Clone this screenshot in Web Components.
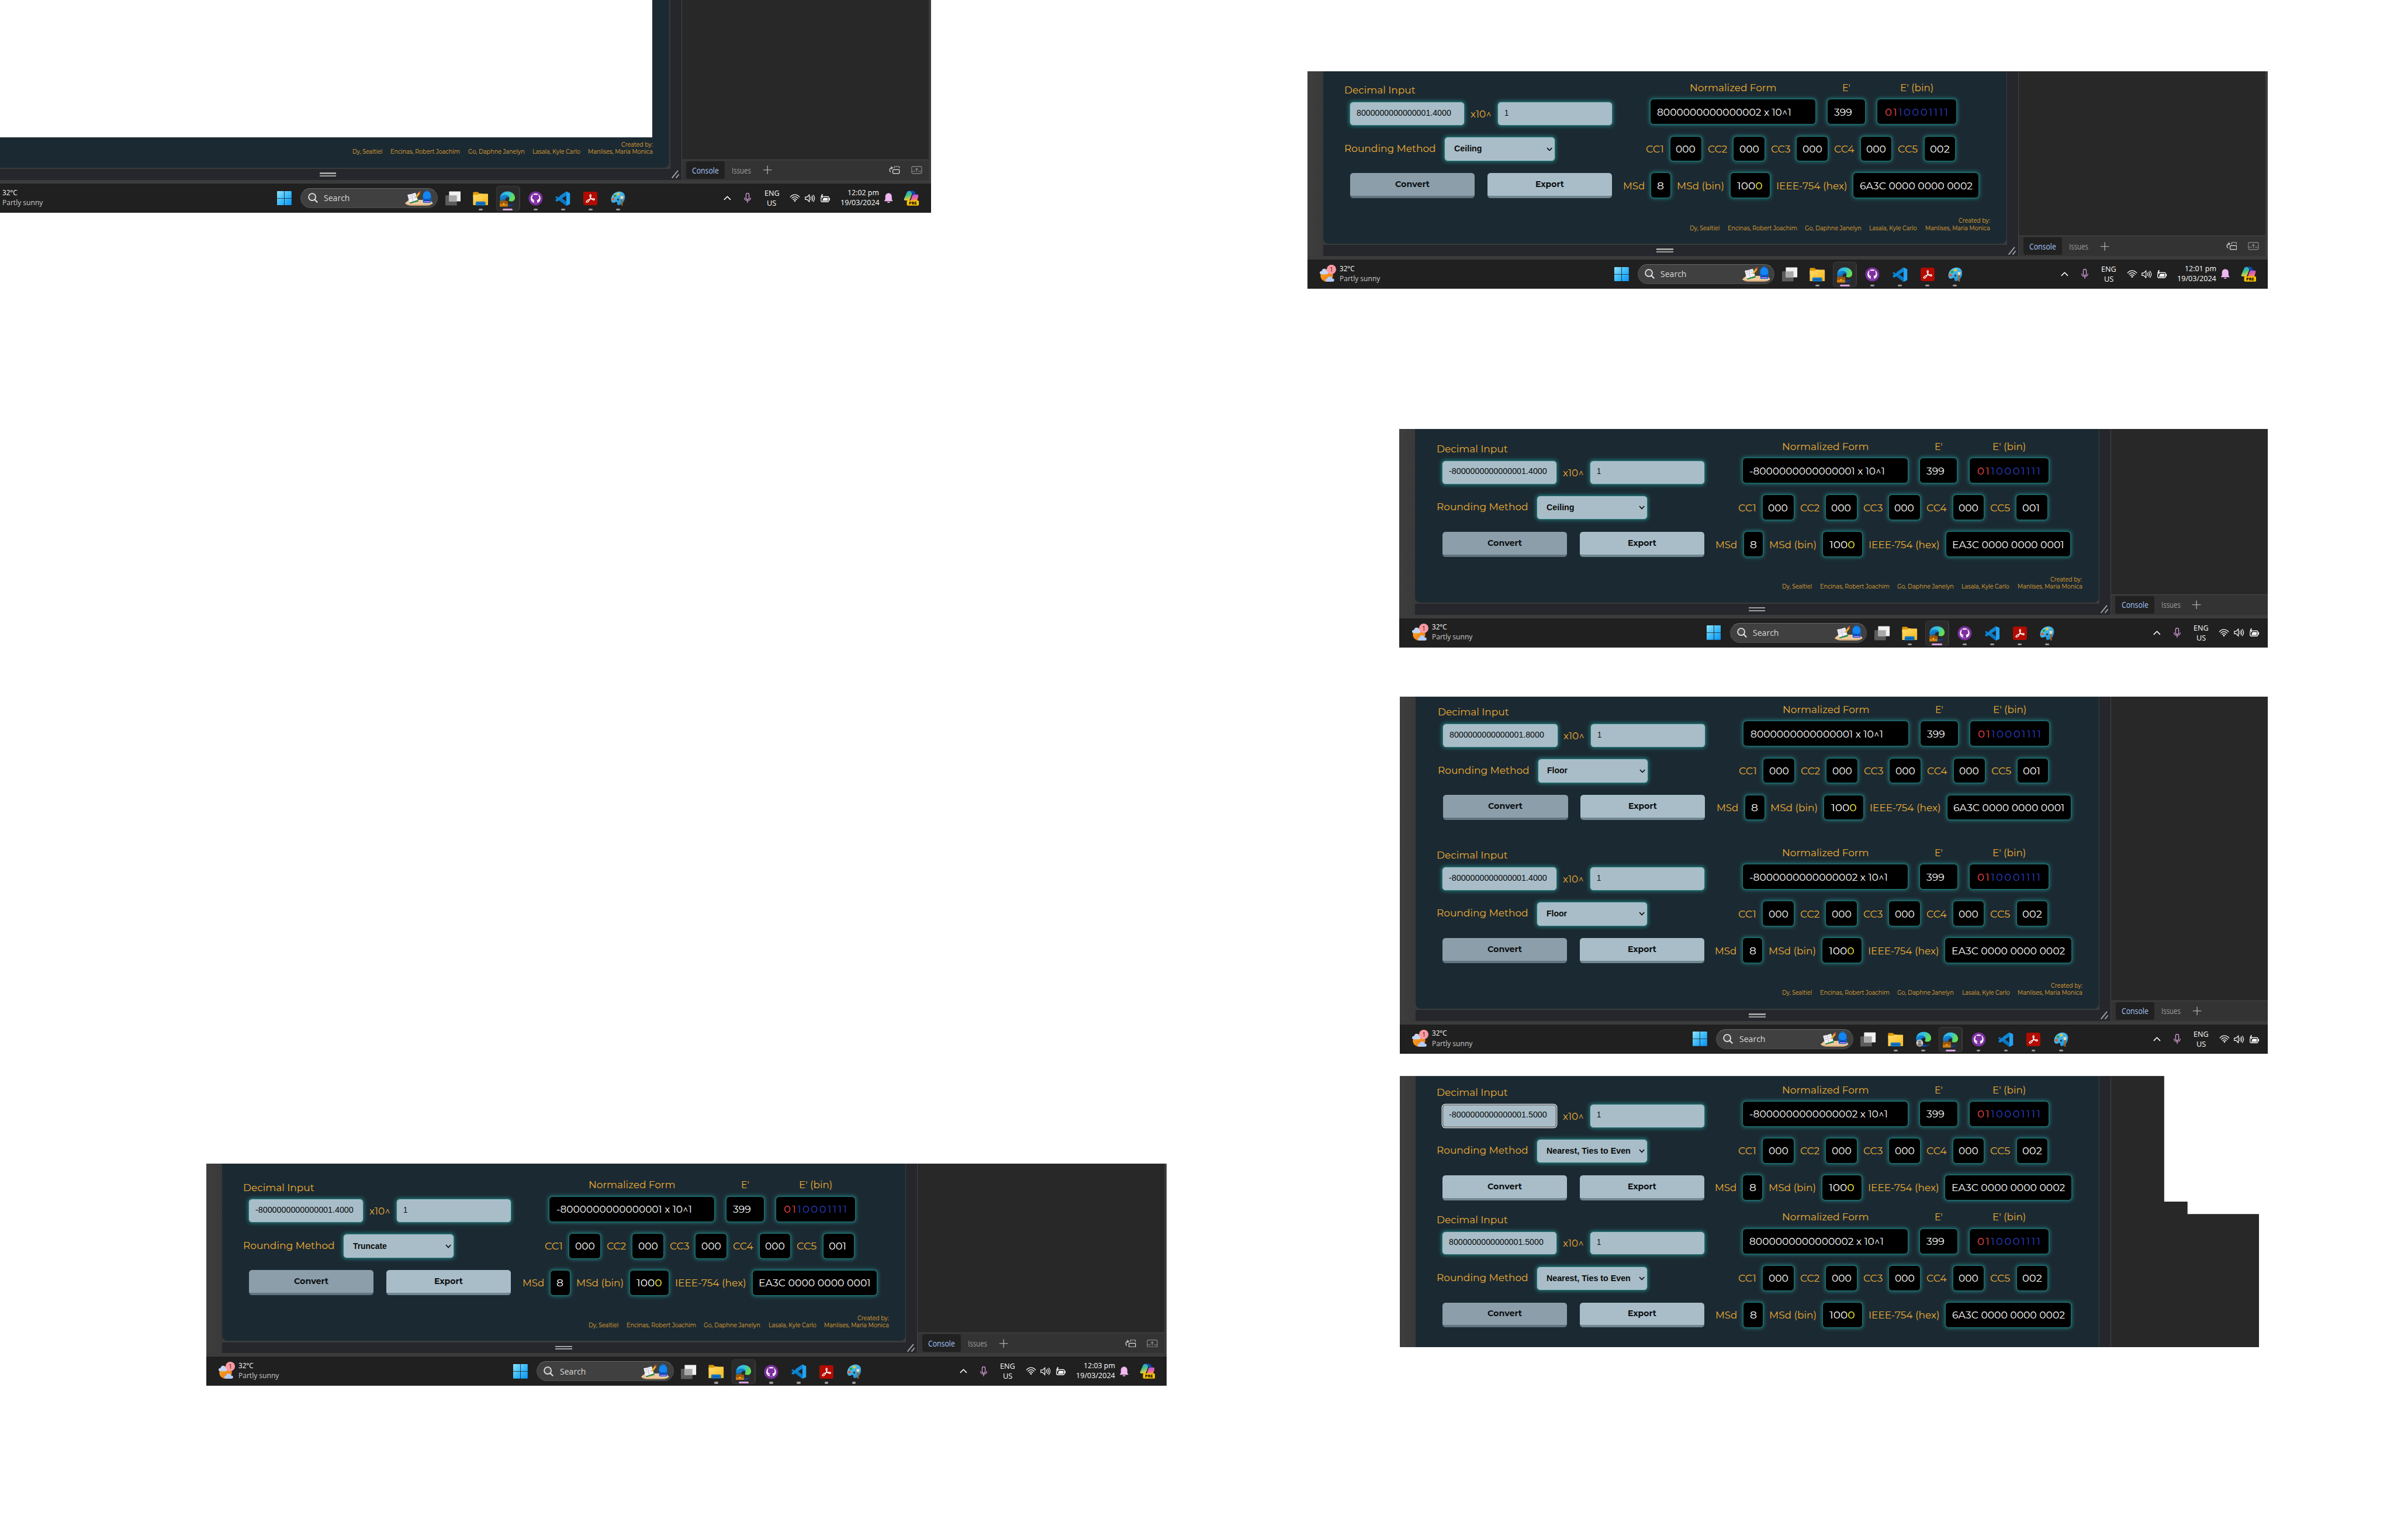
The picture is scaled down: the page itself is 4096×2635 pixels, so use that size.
<!DOCTYPE html>
<html lang="en">
<head>
<meta charset="utf-8">
<title>Decimal-64 converter test captures</title>
<style>
html,body{margin:0;background:#fff}
body{overflow:hidden;width:4096px;height:2635px;font-family:Montserrat,Inter,"Open Sans",sans-serif;font-feature-settings:"calt" 0}
</style>
</head>
<body>
<test-board></test-board>
<script>
const fits=[];
const mk=(name,render,init)=>customElements.define(name,class extends HTMLElement{
  constructor(){super();this.attachShadow({mode:'open'})}
  connectedCallback(){if(this.done)return;this.done=true;this.shadowRoot.innerHTML=render(this);if(init)init(this)}
});
const A=(e,n,d='')=>e.getAttribute(n)??d;

/* one line of text condensed or stretched to a given width */
mk('fit-text',e=>`<style>
:host{display:block;flex:none;width:${A(e,'w')}px;font-size:${A(e,'s','20')}px;line-height:20px;white-space:pre}
span{display:inline-block;transform-origin:0 50%;vertical-align:top}
</style><span><slot></slot></span>`,e=>fits.push(e));
const fitAll=()=>fits.forEach(e=>{
  const s=e.shadowRoot.querySelector('span');s.style.transform='none';
  const a=e.getBoundingClientRect().width,b=s.getBoundingClientRect().width;
  if(b)s.style.transform=`scaleX(${a/b})`;
});

/* black output box */
mk('value-box',e=>`<style>
:host{display:flex;align-items:center;box-sizing:border-box;flex:none;height:49px;${A(e,'w')?`width:${A(e,'w')}px;`:''}padding:0 ${A(e,'p','12.3')}px;background:#000;color:#fff;border-radius:6px;box-shadow:0 0 0 1.5px #1f6d6e,0 0 8px 1.5px #23787a}
</style><slot></slot>`);

mk('input-box',e=>`<style>
:host{display:flex;align-items:center;box-sizing:border-box;flex:none;width:228px;height:45.3px;padding:0 13px 3px;background:#a8bdc8;color:#0b0b0b;border-radius:6px;font-family:"Liberation Sans",sans-serif;font-weight:400;box-shadow:0 0 0 1px #257a7a,0 0 8px 1.5px #23787a}
:host([focused]){box-shadow:inset 0 0 0 1px #101010,0 0 0 1.5px #fff}
</style><slot></slot>`);

mk('push-button',e=>`<style>
:host{display:flex;align-items:center;justify-content:center;box-sizing:border-box;flex:none;width:249px;height:50px;background:#a8bdc8;border-bottom:5px solid #718792;border-radius:6px;color:#0c0f12;font-weight:700}
:host([pressed]){background:#8b9eaa;border-bottom-color:#617480}
</style><slot></slot>`);

mk('select-box',e=>`<style>
:host{display:flex;align-items:center;justify-content:space-between;box-sizing:border-box;flex:none;width:219px;height:46.3px;padding:0 4px 0 18px;background:#a8bdc8;color:#0b0b0b;border-radius:6px;font:700 16.6px "Liberation Sans",sans-serif;box-shadow:0 0 0 1px #257a7a,0 0 8px 1.5px #23787a}
svg{width:12px;height:8px}
</style><slot></slot><svg viewBox="0 0 12 8"><path d="M1.2 1.2 6 6.4l4.8-5.2" fill="none" stroke="#0b0b0b" stroke-width="2"/></svg>`);

mk('convert-form',e=>{
 const cc=[[36],[39],[39],[40.6],[40]];
 return `<style>
:host{display:flex;height:253px;color:#eeac34;flex:none;font-weight:400}
.l{width:588.5px;padding:26.8px 0 0 43px;box-sizing:border-box;flex:none}
.in{display:flex;align-items:center;gap:12.6px;margin:14.9px 0 0 11.5px}
.rm{display:flex;align-items:center;gap:18px;margin-top:24.7px}
.rm>fit-text{padding-bottom:4px}
.bt{display:flex;gap:25px;margin:25px 0 0 11.5px}
.r{width:733px;padding-top:21.8px;box-sizing:border-box;flex:none}
.g{display:flex;gap:25px;padding-left:66.6px}
.g>div{display:flex;flex-direction:column;align-items:center;gap:14.3px}
.c{display:flex;align-items:center;gap:12.9px;padding-left:57.2px;margin-top:24.7px}
.m{display:flex;align-items:center;justify-content:center;gap:12.8px;margin-top:24.6px}
i{font-style:normal}.d{letter-spacing:2.6px}.red{color:#f4474b}.blue{color:#2b3fc4}.y{color:#f6f83c}
</style>
<div class="l">
 <fit-text w="142">Decimal Input</fit-text>
 <div class="in"><input-box ${e.hasAttribute('focused')?'focused':''}><fit-text w="${A(e,'iw')}" s="16.6">${A(e,'in')}</fit-text></input-box><fit-text w="42">x10^</fit-text><input-box><fit-text w="8.5" s="16.6">1</fit-text></input-box></div>
 <div class="rm"><fit-text w="183">Rounding Method</fit-text><select-box><fit-text w="${A(e,'mw')}" s="16.6">${A(e,'method')}</fit-text></select-box></div>
 <div class="bt"><push-button ${e.hasAttribute('idle')?'':'pressed'}><fit-text w="69" s="16">Convert</fit-text></push-button><push-button><fit-text w="57" s="16">Export</fit-text></push-button></div>
</div>
<div class="r">
 <div class="g">
  <div><fit-text w="173.5">Normalized Form</fit-text><value-box w="329" p="13"><fit-text w="${A(e,'nw')}">${A(e,'norm')}</fit-text></value-box></div>
  <div><fit-text w="16">E'</fit-text><value-box w="74"><fit-text w="36">399</fit-text></value-box></div>
  <div><fit-text w="67">E' (bin)</fit-text><value-box w="157.5" p="15"><fit-text w="129" class="d"><i class="red">01</i><i class="blue">10001111</i></fit-text></value-box></div>
 </div>
 <div class="c">${cc.map(([w],i)=>`<fit-text w="${w}">CC${i+1}</fit-text><value-box w="61.5" p="11"><fit-text w="${i==4&&A(e,'last')=='001'?35:39.5}">${i==4?A(e,'last'):'000'}</fit-text></value-box>`).join('')}</div>
 <div class="m"><fit-text w="43.4">MSd</fit-text><value-box w="38.5"><fit-text w="14">8</fit-text></value-box><fit-text w="94.6">MSd (bin)</fit-text><value-box w="78" p="13"><fit-text w="51">100<i class="y">0</i></fit-text></value-box><fit-text w="142">IEEE-754 (hex)</fit-text><value-box><fit-text w="${A(e,'hw')}">${A(e,'hex')}</fit-text></value-box></div>
</div>`});

mk('credit-lines',e=>`<style>
:host{display:flex;flex-direction:column;align-items:flex-end;color:#e6a533;padding:35.5px 33px 0 0;height:55px;box-sizing:content-box;flex:none}
div{display:flex;gap:15.8px;margin-top:-5.7px}
</style><fit-text w="63" s="12">Created by:</fit-text><div><fit-text w="60" s="12">Dy, Sealtiel</fit-text><fit-text w="139" s="12">Encinas, Robert Joachim</fit-text><fit-text w="113" s="12">Go, Daphne Janelyn</fit-text><fit-text w="95.5" s="12">Lasala, Kyle Carlo</fit-text><fit-text w="129.5" s="12">Manlises, Maria Monica</fit-text></div>`);

const G={
start:`<svg width="29" height="29" viewBox="0 0 29 29"><defs><linearGradient id="a" x2="1" y2="1"><stop stop-color="#8fe2ff"/><stop offset=".5" stop-color="#3cbcfb"/><stop offset="1" stop-color="#0a93f5"/></linearGradient></defs><path fill="url(#a)" d="M0 1a1 1 0 0 1 1-1h13v14H0zM15 0h13a1 1 0 0 1 1 1v13H15zM0 15h14v14H1a1 1 0 0 1-1-1zM15 15h14v13a1 1 0 0 1-1 1H15z"/></svg>`,
lens:`<svg width="20" height="20" viewBox="0 0 20 20" fill="none" stroke="#e4e4e4" stroke-width="2.1"><circle cx="8.3" cy="8.3" r="7" fill="#4c4f50"/><path d="M13.3 13.5l5 5" stroke-width="2.4" stroke-linecap="round"/></svg>`,
school:`<svg width="58" height="32" viewBox="0 0 58 32"><path d="M1 26.500 9 20h42l6 6.500q-5 4.500-14 4.500H15Q5 31 1 26.500z" fill="#efc99c"/><path d="M1 26.500q5 3 14 3h28q9 0 14-3-5 5-14 5H15q-9 0-14-5z" fill="#c79c6c"/><path d="M7 11 24 7l4 16-17 4.500z" fill="#2d8a4b"/><path d="M6 9.500 14.500 8 17 23l-7 2zM14.500 8 22 5.500 26.500 20 17 23z" fill="#f4f2fa"/><path d="M14.500 8 17 23M9 13l4-1M10 17l4-1M17.500 11l4-1M18.500 15l4-1" stroke="#a9a3be" fill="none"/><path d="M22 14 28 5l3.500 2L25 15l-3 2z" fill="#f7a928"/><path d="M27.500 5.500 29.300 3q2-1 2.700.6l-1 3z" fill="#e5543f"/><path d="M42 2.500q3-3 6 0v3h-6z" fill="none" stroke="#1c6fd8" stroke-width="1.500"/><path d="M37 12q0-9 8-9t8 9v12q0 2-2 2H39q-2 0-2-2z" fill="#1186f4"/><path d="M37 16h4v9h-3zM53 16h-4v9h3z" fill="#0b5fc8"/><path d="M38 21q7-6 14 0v3q-7 3-14 0z" fill="#0a49ad"/><path d="M39 23.500h12" stroke="#b678f0" stroke-width="2.200"/></svg>`,
tasks:`<svg width="31" height="29" viewBox="0 0 31 29"><rect y="8.500" width="23" height="20" rx="1" fill="#5c5c5c"/><rect x="7.500" y="0.500" width="23" height="20" rx="1" fill="#f1f1f1"/><path d="M7.500 8.500H23v12H7.500z" fill="#a9a9a9"/></svg>`,
folder:`<svg width="31" height="28" viewBox="0 0 31 28"><defs><linearGradient id="f" x2="1" y2="1"><stop stop-color="#ffdc6b"/><stop offset="1" stop-color="#fbb81b"/></linearGradient></defs><path d="M.5 2Q.5.500 2 .5h8l3 3h5v8H.5z" fill="#dd9a06"/><path d="M.5 6h10l3-2H29q1.500 0 1.500 1.500V27H.5z" fill="url(#f)"/><path d="M5.500 27.500V22q0-2.500 2.500-2.500h15q2.500 0 2.500 2.500v5.500z" fill="#1377c4"/><path d="M9 23.800h13" stroke="#0a4f92" stroke-width="1.200"/></svg>`,
edge:(b)=>`<svg width="31" height="31" viewBox="0 0 31 31"><defs><linearGradient id="e1" x2="1" y2=".4"><stop stop-color="#2aa6ee"/><stop offset=".5" stop-color="#35c1e0"/><stop offset="1" stop-color="#66e04e"/></linearGradient><linearGradient id="e2" x2=".6" y2="1"><stop stop-color="#1493df"/><stop offset="1" stop-color="#0b4ea6"/></linearGradient></defs><path d="M.5 15C.5 6 7 .5 15.500.500 24.500.500 30.500 6.500 30.500 13c0 5-3.500 7.500-7.500 7.500-4.500 0-5.500-1.700-4.500-3 2-3.500-.5-7.500-6-7.500C6 10 .5 12 .5 15z" fill="url(#e1)"/><path d="M.5 14C1.500 9 6 7.500 11 7.500c5 0 8.500 2.500 8.500 5.500-5-2.500-8.500 1-8.500 5 0 5 4.500 9 10 9 3 0 5.500-1 7.500-2.500C26 28.500 21.500 30.500 16 30.500 6.500 30.500.500 23.500.500 14z" fill="url(#e2)"/><path d="M11 18c0 5 4.500 9 10 9 3 0 5.500-1 7.500-2.500-2.500 4-7 6-12.500 6-3-3-5.500-7-5-12.500z" fill="#123f8c"/>${b=='w'?`<path d="M5 20v-2h6v2" fill="none" stroke="#7a4608" stroke-width="1.300"/><rect y="20" width="16" height="11" rx="1" fill="#cf7d0e"/><path d="M0 20h16v5.500H0z" fill="#9a5408"/><circle cx="8" cy="25.500" r="1.500" fill="#ffcf40"/>`:`<circle cx="7.500" cy="23" r="7" fill="#c9c6c4"/><circle cx="7.500" cy="20.500" r="2.800" fill="#7c7875"/><path d="M3 27q0-3.500 4.500-3.500T12 27q-4 3.500-9 0z" fill="#7c7875"/>`}</svg>`,
github:`<svg width="29" height="29" viewBox="0 0 29 29"><circle cx="14.500" cy="14.500" r="14" fill="#7d2fa0"/><circle cx="14.500" cy="14.500" r="9.800" fill="#fff"/><path d="M11.500 24v-3.500c-2.500.5-3-1-4-2 1.500 0 2 1.500 4 1 .1-.8.400-1.400.8-1.700-3-.5-4.800-1.800-4.800-5 0-1.400.5-2.500 1.200-3.300-.2-.8-.2-2 .2-3 1.300.1 2.200.6 3 1.200 1.700-.5 3.700-.5 5.400 0 .8-.6 1.700-1.100 3-1.200.4 1 .4 2.200.2 3 .7.8 1.200 1.900 1.200 3.300 0 3.200-1.800 4.500-4.800 5 .5.500.8 1.300.8 2.200v4z" fill="#7d2fa0"/></svg>`,
code:`<svg width="30" height="30" viewBox="0 0 30 30"><path d="M22 .5 29.500 4v22L22 29.500z" fill="#24a3f3"/><path d="M22 .5 8 14 3 10 .5 11.200v2L22 29.500V21L8 10z" fill="#0a77c2"/><path d="M22 .5V9L3.500 21 .5 19.200v-2z" fill="#0e86d6"/></svg>`,
pdf:`<svg width="28" height="27" viewBox="0 0 28 27"><rect width="28" height="27" rx="4" fill="#b30b00"/><path d="M6 19.500c1.500-3 9-6 15-5.500 2.500.5 1.500 3-1 2.500-4-1-7-5-7-8.500 0-3 2.500-3 2.500-.5 0 4-4 12-7 13.500-1.500.5-3-.3-2.500-1.500z" fill="none" stroke="#fff" stroke-width="1.600"/></svg>`,
paint:`<svg width="29" height="30" viewBox="0 0 29 30"><defs><linearGradient id="p" x2=".8" y2="1"><stop stop-color="#6fd8f8"/><stop offset="1" stop-color="#1689d2"/></linearGradient></defs><path d="M17 1c7 0 11.500 4.500 11.500 10.500 0 8-6 16.500-13 16.500-4 0-1.500-4-3.500-6-2.500-2-4 2.500-8 1C1 22.500 0 18 1 14 2.500 7 9 1 17 1z" fill="url(#p)"/><circle cx="8" cy="9.500" r="2.800" fill="#35a043"/><circle cx="15" cy="6" r="2.600" fill="#f7c52b"/><circle cx="5" cy="16" r="2.700" fill="#e4572f"/><circle cx="14.500" cy="17" r="2" fill="#16405c"/><path d="M19 10h6.500l-1 6h-4.500z" fill="#ecd9b4"/><path d="M21 16h2.800v12q-1.400 3-2.800 0z" fill="#a8611c"/></svg>`,
up:`<svg width="15" height="9" viewBox="0 0 15 9"><path d="M1 8l6.500-6.500L14 8" fill="none" stroke="#fff" stroke-width="1.900"/></svg>`,
mic:`<svg width="14" height="20" viewBox="0 0 14 20" fill="none" stroke="#d9a0dc" stroke-width="1.500"><rect x="4" y=".8" width="6" height="12.500" rx="3"/><path d="M.8 9.500C.8 17.500 13.200 17.500 13.200 9.500M7 15.500V20"/></svg>`,
wifi:`<svg width="21" height="16" viewBox="0 0 21 16" fill="none" stroke="#fff" stroke-width="1.500"><path d="M1 6.200c5.500-6.500 13.500-6.500 19 0M3.800 9c4-4.800 9.400-4.800 13.400 0M6.500 11.700c2.500-3 5.500-3 8 0"/><circle cx="10.500" cy="13.600" r="1.600" fill="#fff" stroke="none"/></svg>`,
sound:`<svg width="21" height="17" viewBox="0 0 21 17" fill="none" stroke="#fff" stroke-width="1.400"><path d="M1 6h3.500L9 1.500v14L4.500 11H1zM11.500 5.500q2.500 3 0 6M14 3.500q4 5 0 10M16.500 1.500q6 7 0 14"/></svg>`,
batt:`<svg width="21" height="17" viewBox="0 0 21 17"><rect x="2" y="5" width="15.500" height="10.500" rx="2" fill="none" stroke="#fff" stroke-width="1.500"/><path d="M7 7.500h8.500v6h-11zM18 8h2v4.500h-2z" fill="#fff"/><path d="M3.500 0 1 6.500h2.500L2.500 11 7.500 4H5L6 0z" fill="#fff" stroke="#202020" stroke-width=".5"/></svg>`,
bell:`<svg width="17" height="20" viewBox="0 0 17 20" fill="#efb8f1"><path d="M2 13V7.500C2 3 5 .5 8.500.500S15 3 15 7.500V13l2 3v.8H0V16zM5.500 17.800h6q-.6 2.200-3 2.200t-3-2.200z"/></svg>`,
pilot:`<svg width="31" height="30" viewBox="0 0 31 30"><defs><linearGradient id="c1" x2=".3" y2="1"><stop stop-color="#1f9df0"/><stop offset=".5" stop-color="#3fc08a"/><stop offset="1" stop-color="#f5cb30"/></linearGradient><linearGradient id="c2" x2=".3" y2="1"><stop stop-color="#9a5cf0"/><stop offset=".6" stop-color="#e95fa8"/><stop offset="1" stop-color="#f58a5a"/></linearGradient></defs><path d="M7 3Q8 1 10.500 1h8.500l-6.500 17q-.8 2-3 2H3Q0 20 1 16.500z" fill="url(#c1)"/><path d="M13 1h6q3 0 4 3l1 4h-5z" fill="#1246b8"/><path d="M17.500 10q.7-2 3-2H27q3 0 2.500 3.500L27 20H14z" fill="url(#c2)"/><rect x="6.500" y="20" width="24" height="10" rx="2" fill="#ffc400"/><text x="18.500" y="28.200" text-anchor="middle" font-family="Open Sans,sans-serif" font-size="8.500" font-weight="800" fill="#1a1400">PRE</text></svg>`,
sun:`<svg width="32" height="29" viewBox="0 0 32 29"><defs><linearGradient id="w" x2=".6" y2="1"><stop stop-color="#fbb02b"/><stop offset="1" stop-color="#ef7a12"/></linearGradient></defs><circle cx="14" cy="14.500" r="12.500" fill="url(#w)"/><path d="M3.500 12Q0 12 0 8.800T4 5.500Q5 1 9 1t5 4.500q3 0 3 3.200T13.500 12z" fill="#c4d6f8"/><path d="M15 27q-3.500 0-3.500-3.200t3.500-3.300q1-4 5-4t5 4q4 0 4 3.200T25.500 27z" fill="#b3cbf5"/></svg>`
};

mk('app-icon',e=>`<style>
:host{display:flex;flex-direction:column;align-items:center;justify-content:flex-end;width:48px;height:50px;flex:none;box-sizing:border-box}
:host([active]){background:#2b2b2b;border:1px solid #3a3a3a;border-right-width:3px;border-radius:6px}
.i{height:32px;display:flex;align-items:center;margin-bottom:${e.hasAttribute('active')?3:4}px}
b{height:4px;width:8px;border-radius:2px;background:${e.hasAttribute('plain')?'transparent':'#999'};margin-bottom:1px}
:host([active]) b{width:20px;background:#d99fe2;margin-bottom:0}
svg{display:block}
</style><div class="i">${A(e,'name').startsWith('edge')?G.edge(A(e,'name').slice(4)):G[A(e,'name')]}</div><b></b>`);

mk('win-taskbar',e=>{
const cut=e.hasAttribute('cut'),nb=e.hasAttribute('extra');
return `<style>
:host{display:flex;height:59.300px;box-sizing:border-box;background:#202020;border-top:1.500px solid #414141;color:#fff;font-family:"Open Sans","Noto Sans",sans-serif;flex:none;align-items:center}
svg{display:block;flex:none}
.w{display:flex;width:${nb?585.500:613.500}px;flex:none;align-items:center;padding-left:25px;box-sizing:border-box}
.w .ic{width:39.500px;position:relative;height:34px;display:flex;align-items:flex-end}
.bd{position:absolute;left:14px;top:-2px;width:19px;height:19px;border-radius:50%;background:#ff98a2;color:#222;font-size:12px;line-height:19px;text-align:center}
.w .t{padding-bottom:3px}
.w .t fit-text:last-child{color:#c8c8c8}
.s{display:flex;align-items:center;width:274px;height:40px;box-sizing:border-box;background:#404040;border:1px solid #4e4e4e;border-top-color:#686868;border-radius:20px;margin-left:18px;padding:0 7px 0 13px;color:#dadada;flex:none}
.s fit-text{margin-left:12px;margin-right:auto}
.a{display:flex;margin-left:6.500px;gap:7px;padding-top:2px}
.y{display:flex;align-items:center;margin-left:auto;width:414px;flex:none;box-sizing:border-box}
.k{display:flex;flex-direction:column;align-items:center}
</style>
<div class="w"><div class="ic">${e.hasAttribute('noicon')?'':G.sun+'<span class="bd">1</span>'}</div><div class="t"><fit-text w="30" s="15.500">32°C</fit-text><fit-text w="81" s="15.500">Partly sunny</fit-text></div></div>
${G.start}
<div class="s">${G.lens}<fit-text w="52" s="17">Search</fit-text>${G.school}</div>
<div class="a"><app-icon name="tasks" plain></app-icon><app-icon name="folder"></app-icon>${nb?'<app-icon name="edgep"></app-icon>':''}<app-icon name="edgew" active></app-icon><app-icon name="github"></app-icon><app-icon name="code"></app-icon><app-icon name="pdf"></app-icon><app-icon name="paint"></app-icon></div>
<div class="y">${G.up}<div style="margin-left:26px">${G.mic}</div><div class="k" style="margin-left:26px"><fit-text w="30" s="15.500">ENG</fit-text><fit-text w="19" s="15.500">US</fit-text></div><div style="margin-left:21px">${G.wifi}</div><div style="margin-left:9px">${G.sound}</div><div style="margin-left:9px">${G.batt}</div>
${cut?'':`<div class="k" style="margin-left:20px;align-items:flex-end;padding-bottom:2px"><fit-text w="63" s="15.500">${A(e,'time')}</fit-text><fit-text w="78" s="15.500">19/03/2024</fit-text></div><div style="margin-left:10px">${G.bell}</div><div style="margin-left:22px">${G.pilot}</div>`}</div>`});

mk('dev-tools',e=>{
const bare=e.hasAttribute('bare'),cut=e.hasAttribute('cut');
return `<style>
:host{display:flex;flex-direction:column;justify-content:flex-end;box-sizing:border-box;width:494px;flex:none;background:#282828;border-left:2px solid #434343;font-family:"Open Sans","Noto Sans",sans-serif}
.d{display:flex;align-items:center;height:41px;box-sizing:border-box;background:#333;border-top:1.500px solid #484848;padding:0 13px 0 8.500px;color:#9c9c9c}
.c{display:flex;align-items:center;background:#212121;border-radius:4px;height:35px;padding:0 12px;color:#a4c4fa;margin-right:14px}
.p{margin-left:23px}
.r{margin-left:auto;display:flex;gap:22px}
svg{display:block}
</style>${bare?'':`<div class="d"><div class="c"><fit-text w="53.500" s="16">Console</fit-text></div><fit-text w="38.500" s="16">Issues</fit-text><svg class="p" width="19" height="18" viewBox="0 0 19 18"><path d="M9.500.500v17M1 9h17" stroke="#c4c4c4" stroke-width="1.300"/></svg>
${cut?'':`<div class="r"><svg width="22" height="16" viewBox="0 0 22 16" fill="none" stroke="#e4e4e4" stroke-width="1.400"><rect x="7.700" y="7.500" width="13" height="7.500" rx="1.200"/><path d="M10.500 4.500V1h10.200v5" stroke-dasharray="2.200 1.500"/><path d="M3.500 12.500C0 9 1 4 5.500 3.500M4 1l3 2.500-2.500 3"/></svg><svg width="22" height="16" viewBox="0 0 22 16" fill="none" stroke="#8f8f8f" stroke-width="1.300"><rect x="1" y="1" width="20" height="14" rx="2"/><path d="M1 10.500h7m6 0h7M11 12V5M8.200 7.500 11 4.800l2.800 2.700"/></svg></div>`}</div>`}`});

/* a browser window cropped to the given box */
mk('screen-crop',e=>{
const bare=e.hasAttribute('bare'),cut=e.hasAttribute('cut')?'cut':'';
const H=+A(e,'h'),W=+A(e,'w'),dx=+A(e,'dx','0');
return `<style>
:host{display:block;position:absolute;left:${A(e,'x')}px;top:${A(e,'y')}px;width:${W}px;height:${H}px;overflow:hidden;background:#3b3b3b}
.win{display:flex;flex-direction:column;width:1920px;height:${H}px;margin-left:${-dx}px}
.top{display:flex;flex:1;min-height:0}
.edge{width:31.500px;flex:none;background:linear-gradient(90deg,#3e3e3e,#393939)}
.mid{display:flex;flex-direction:column;width:1390px;flex:none}
.row{display:flex;flex:1;min-height:0}
.page{width:1366px;margin-right:1.500px;margin-bottom:${bare?0:3}px;background:#1b2a32;border-radius:${bare?0:'0 0 10px 10px'};display:flex;flex-direction:column;min-height:0}
.v{flex:1;background:#26272c}
.bar{height:22px;background:#26272c;display:flex;align-items:center;justify-content:space-between;padding:0 3px 0 666.800px;flex:none}
.grip{display:flex;flex-direction:column;gap:2.600px}
.grip i{width:33px;height:2.700px;background:#a2a2a2}
.rim{height:5.700px;flex:none;background:#3b3b3b}
</style>
<div class="win"><div class="top"><div class="edge"></div><div class="mid"><div class="row"><div class="page"><slot></slot></div><div class="v"></div></div>
${bare?'':`<div class="bar"><div class="grip"><i></i><i></i></div><svg width="18" height="17" viewBox="0 0 18 17"><path d="M2 16 14 1M10 16l6-7.500" stroke="#a2a2a2" stroke-width="2.200"/></svg></div>`}</div><dev-tools ${bare?'bare':''} ${cut}></dev-tools></div>
${bare?'':`<div class="rim"></div><win-taskbar ${cut} ${e.hasAttribute('extra')?'extra':''} ${dx?'noicon':''} time="${A(e,'time')}"></win-taskbar>`}</div>`});

mk('test-board',e=>{
const P8='8000000000000001',F=(o)=>`<convert-form in="${o.i}" iw="${o.i[0]=='-'?196:189}" method="${o.m}" mw="${{Ceiling:55.5,Floor:41,Truncate:67.5}[o.m]||168}" norm="${o.n} x 10^1" nw="${{'80':{1:265,2:268.5},'-8':{1:271,2:276.8}}[o.n.slice(0,2)][o.n.slice(-1)]}" last="00${o.n.slice(-1)}" hex="${o.n[0]=='-'?'EA3C':'6A3C'} 0000 0000 000${o.n.slice(-1)}" hw="${(o.n[0]=='-'?223.8:222.3)+(o.n.slice(-1)=='2'?3.2:0)}" style="margin-top:${o.t||0}px;margin-left:${o.l||0}px" ${o.x||''}></convert-form>`;
return `<style>
:host{display:block;position:relative;width:4785px;height:3078px;zoom:.856;overflow:hidden;background:#fff}
.blank{position:absolute;left:0;top:0;width:1303.500px;height:274px;background:#fff}
.sp{flex:none;height:244px}
.steps{clip-path:polygon(0 0,1528px 0,1528px 251px,1574.600px 251px,1574.600px 276px,1717.600px 276px,1717.600px 100%,0 100%)}
</style>
<screen-crop x="0" y="0" w="1860.500" h="425" dx="59.500" time="12:02 pm"><div class="sp"></div><credit-lines></credit-lines></screen-crop><div class="blank"></div>
<screen-crop x="2612.800" y="143" w="1920" h="434" time="12:01 pm">${F({i:P8+'.4000',m:'Ceiling',n:'8000000000000002'})}<credit-lines></credit-lines></screen-crop>
<screen-crop x="2797.200" y="857" w="1736" h="437" cut>${F({i:'-'+P8+'.4000',m:'Ceiling',n:'-8000000000000001',t:3})}<credit-lines></credit-lines></screen-crop>
<screen-crop x="2797.500" y="1392" w="1735.500" h="714" cut extra>${F({i:P8+'.8000',m:'Floor',n:'8000000000000001',t:-6,l:1.3})}${F({i:'-'+P8+'.4000',m:'Floor',n:'-8000000000000002',t:33})}<credit-lines></credit-lines></screen-crop>
<screen-crop class="steps" x="2797.500" y="2151" w="1718" h="542" bare>${F({i:'-'+P8+'.5000',m:'Nearest, Ties to Even',n:'-8000000000000002',t:-5,x:'focused idle'})}${F({i:P8+'.5000',m:'Nearest, Ties to Even',n:'8000000000000002',t:1.5})}</screen-crop>
<screen-crop x="412" y="2326" w="1920" h="444" time="12:03 pm">${F({i:'-'+P8+'.4000',m:'Truncate',n:'-8000000000000001',t:10})}<credit-lines></credit-lines></screen-crop>`});
fitAll();
document.fonts.ready.then(fitAll);
</script>
</body>
</html>
